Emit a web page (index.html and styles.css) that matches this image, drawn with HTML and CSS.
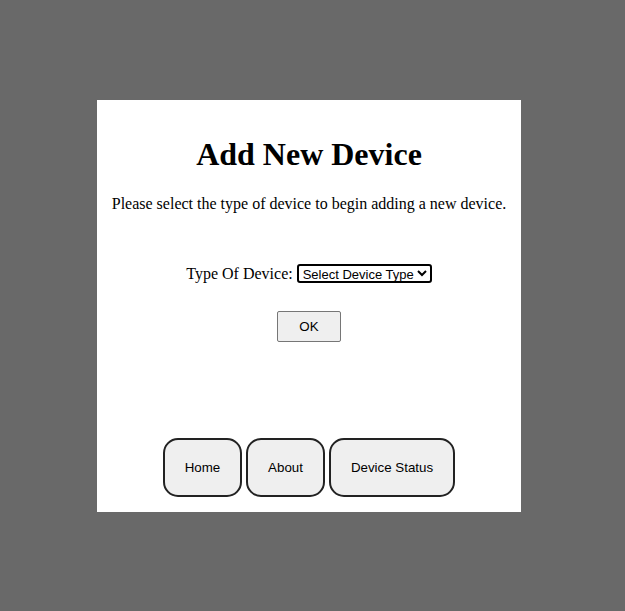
FILE: index.html
```html
<!DOCTYPE html>
<html>
<head>
<meta charset="utf-8">
<link rel="stylesheet" href="styles.css">
</head>
<body>
<div class="card">
  <h1 class="title">Add New Device</h1>
  <p class="intro">Please select the type of device to begin adding a new device.</p>
  <div class="field">
    <label class="field-label" for="type">Type Of Device:</label>
    <select id="type" class="field-select">
      <option>Select Device Type</option>
    </select>
  </div>
  <div class="actions">
    <button class="ok-btn">OK</button>
  </div>
  <nav class="nav">
    <button class="nav-btn nav-home">Home</button>
    <button class="nav-btn nav-about">About</button>
    <button class="nav-btn nav-status">Device Status</button>
  </nav>
</div>
</body>
</html>
```
FILE: styles.css
```css
html, body {
  margin: 0;
  padding: 0;
}
body {
  background: #696969;
  font-family: "Liberation Serif", "Times New Roman", serif;
  height: 611px;
  overflow: hidden;
}
.card {
  background: #fff;
  width: 424px;
  height: 412px;
  margin: 100px 0 0 97px;
  box-sizing: border-box;
  padding-top: 36px;
  text-align: center;
  display: flex;
  flex-direction: column;
  align-items: center;
}
.title {
  font-size: 32px;
  font-weight: bold;
  margin: 0;
  line-height: 37px;
}
.intro {
  font-size: 16px;
  margin: 22px 0 0;
  line-height: 18px;
}
.field {
  margin-top: 51px;
  display: flex;
  align-items: center;
  gap: 4px;
  font-size: 16px;
}
.field-select {
  font-family: "Liberation Sans", Arial, sans-serif;
  font-size: 13px;
  width: 135px;
  height: 19px;
  border: 2px solid #000;
  border-radius: 3px;
  padding: 0;
  background: #fff;
  color: #000;
}
.actions {
  margin-top: 28px;
}
.ok-btn {
  width: 64px;
  height: 31px;
  font-family: "Liberation Sans", Arial, sans-serif;
  font-size: 13.33px;
  background: #efefef;
  border: 1px solid #767676;
  border-radius: 2px;
  color: #000;
}
.nav {
  margin-top: 96px;
  display: flex;
  gap: 4px;
}
.nav-btn {
  height: 59px;
  font-family: "Liberation Sans", Arial, sans-serif;
  font-size: 13.33px;
  background: #efefef;
  border: 2px solid #222;
  border-radius: 15px;
  color: #000;
  padding: 0;
}
.nav-home { width: 79px; }
.nav-about { width: 79px; }
.nav-status { width: 126px; }
```
